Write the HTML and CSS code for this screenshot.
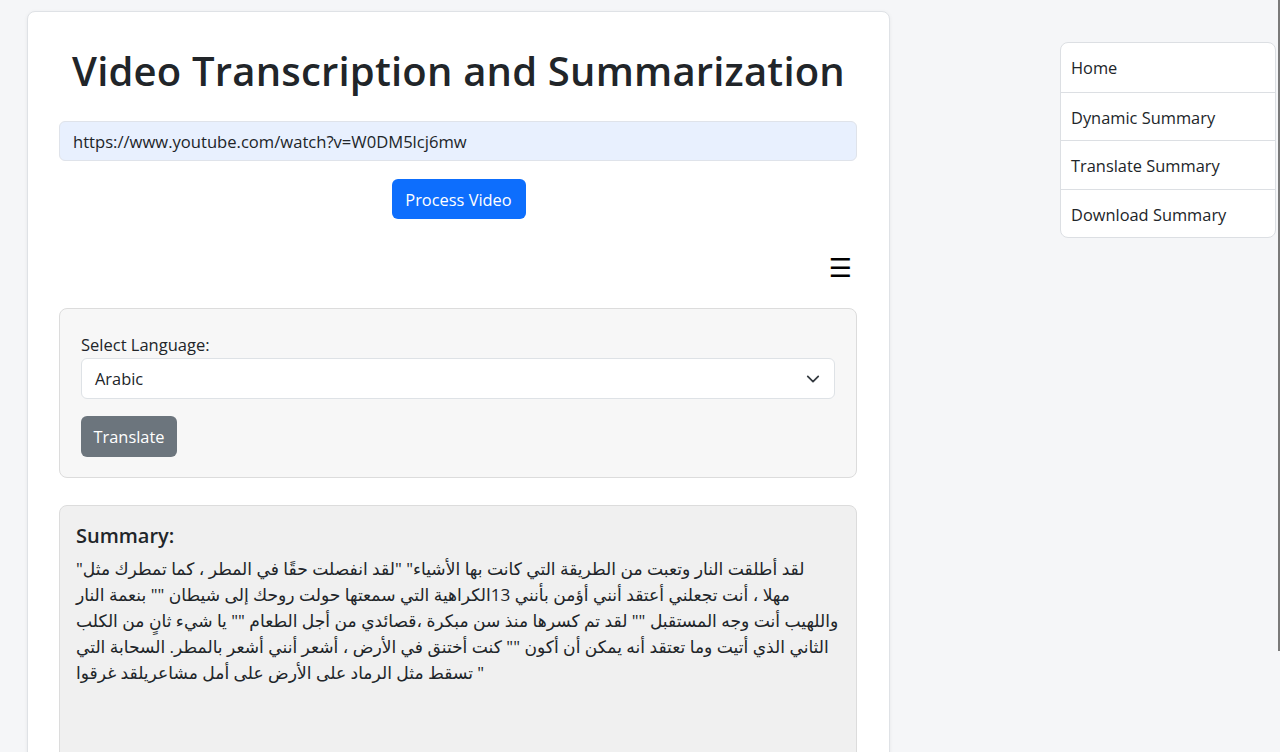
FILE: index.html
```html
<!DOCTYPE html>
<html lang="en">
<head>
<meta charset="utf-8">
<title>Video Transcription and Summarization</title>
<link rel="stylesheet" href="styles.css">
</head>
<body>
<div class="page">
  <main class="card">
    <h1 class="title">Video Transcription and Summarization</h1>
    <input class="url-input" type="text" value="https://www.youtube.com/watch?v=W0DM5lcj6mw">
    <div class="center">
      <button class="btn btn-primary">Process Video</button>
    </div>
    <div class="menu-row">
      <span class="hamburger">&#9776;</span>
    </div>
    <section class="panel translate-panel">
      <label class="label">Select Language:</label>
      <div class="select">
        <span>Arabic</span>
        <svg class="chev" width="16" height="16" viewBox="0 0 16 16"><path d="M2 5l6 6 6-6" fill="none" stroke="#343a40" stroke-width="2" stroke-linecap="round" stroke-linejoin="round"/></svg>
      </div>
      <button class="btn btn-secondary">Translate</button>
    </section>
    <section class="panel summary-panel">
      <h3 class="summary-title">Summary:</h3>
      <p class="summary-text">لقد أطلقت النار وتعبت من الطريقة التي كانت بها الأشياء" "لقد انفصلت حقًا في المطر ، كما تمطرك مثل"&rlm;<br>مهلا ، أنت تجعلني أعتقد أنني أؤمن بأنني 13الكراهية التي سمعتها حولت روحك إلى شيطان "" بنعمة النار<br>واللهيب أنت وجه المستقبل "" لقد تم كسرها منذ سن مبكرة ،قصائدي من أجل الطعام "" يا شيء ثانٍ من الكلب<br>الثاني الذي أتيت وما تعتقد أنه يمكن أن أكون "" كنت أختنق في الأرض ، أشعر أنني أشعر بالمطر. السحابة التي<br>تسقط مثل الرماد على الأرض على أمل مشاعريلقد غرقوا "</p>
    </section>
  </main>
  <nav class="sidebar">
    <a class="nav-item">Home</a>
    <a class="nav-item">Dynamic Summary</a>
    <a class="nav-item">Translate Summary</a>
    <a class="nav-item">Download Summary</a>
  </nav>
  <div class="edge-line"></div>
</div>
</body>
</html>
```
FILE: styles.css
```css
* { box-sizing: border-box; }
html, body { margin: 0; height: 100%; overflow: hidden; }
body {
  background: #f5f6f8;
  font-family: "Open Sans", "Noto Sans", "DejaVu Sans", sans-serif;
  color: #212529;
  font-size: 16px;
}
.page {
  display: flex;
  align-items: flex-start;
  padding: 11px 4px 0 27px;
  position: relative;
  min-height: 752px;
}
.card {
  width: 863px;
  background: #fff;
  border: 1px solid #dfe2e6;
  border-radius: 8px;
  box-shadow: 0 1px 4px rgba(0,0,0,0.06);
  padding: 35px 31px 40px;
  min-height: 800px;
}
.title {
  margin: 0 0 26px;
  text-align: center;
  font-size: 40px;
  font-weight: 600;
  line-height: 1.2;
  letter-spacing: 0.2px;
  color: #212529;
}
.url-input {
  display: block;
  width: 798px;
  height: 40px;
  border: 1px solid #dfe3ea;
  background: #e8f0fe;
  border-radius: 6px;
  padding: 0 13px;
  font: inherit;
  font-size: 16.6px;
  color: #212529;
}
.center { display: flex; justify-content: center; margin-top: 18px; }
.btn {
  height: 40px;
  border: none;
  border-radius: 6px;
  font: inherit;
  font-size: 16.4px;
  color: #fff;
  padding: 0;
  white-space: nowrap;
}
.btn-primary { background: #0d6efd; width: 134px; }
.btn-secondary { background: #6c757d; width: 96px; height: 41px; }
.menu-row {
  display: flex;
  justify-content: flex-end;
  padding: 34px 6px 0 0;
  height: 89px;
}
.hamburger { font-size: 26px; line-height: 30px; color: #000; font-family: "DejaVu Sans", sans-serif; }
.panel {
  border: 1px solid #dcdcdc;
  border-radius: 8px;
  width: 798px;
}
.translate-panel {
  background: #f7f7f7;
  padding: 25px 21px 20px 21px;
  display: flex;
  flex-direction: column;
  align-items: flex-start;
}
.label { font-size: 16.5px; line-height: 22px; margin-bottom: 2px; color: #212529; }
.select {
  width: 100%;
  height: 41px;
  background: #fff;
  border: 1px solid #dee2e6;
  border-radius: 6px;
  display: flex;
  align-items: center;
  justify-content: space-between;
  padding: 0 14px 0 13px;
  margin-bottom: 17px;
  font-size: 16.4px;
}
.chev { width: 14px; height: 14px; }
.summary-panel {
  margin-top: 27px;
  background: #f0f0f0;
  padding: 16px 16px 0;
  min-height: 300px;
}
.summary-title {
  margin: 0 0 6px;
  font-size: 20px;
  font-weight: 600;
  line-height: 28px;
}
.summary-text {
  margin: 0;
  direction: ltr;
  text-align: left;
  white-space: nowrap;
  font-size: 17.1px;
  line-height: 26px;
  color: #212529;
}
.sidebar {
  margin-left: auto;
  margin-top: 31px;
  width: 216px;
  background: #fff;
  border: 1px solid #dcdfe3;
  border-radius: 8px;
  display: flex;
  flex-direction: column;
}
.nav-item {
  display: block;
  height: 48.5px;
  line-height: 49px;
  padding: 0 11px 0 10px;
  font-size: 16.4px;
  color: #212529;
  border-top: 1px solid #dcdfe3;
}
.nav-item:first-child { border-top: none; }
.edge-line {
  position: absolute;
  right: 0;
  top: 0;
  width: 2px;
  height: 651px;
  background: #7a7a7a;
}
```
